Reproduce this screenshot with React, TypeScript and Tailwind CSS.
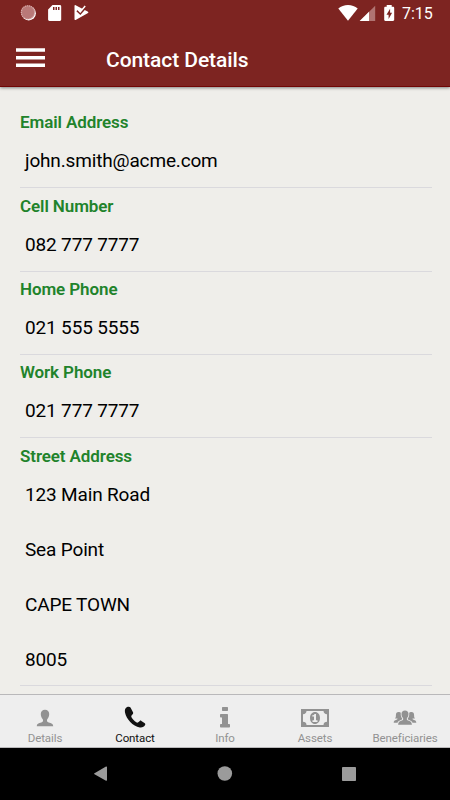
import type { ReactNode } from "react";

const fields = [
  { label: "Email Address", lines: ["john.smith@acme.com"] },
  { label: "Cell Number", lines: ["082 777 7777"] },
  { label: "Home Phone", lines: ["021 555 5555"] },
  { label: "Work Phone", lines: ["021 777 7777"] },
  {
    label: "Street Address",
    lines: ["123 Main Road", "Sea Point", "CAPE TOWN", "8005"],
  },
];

const tabs: { name: string; icon: ReactNode }[] = [
  {
    name: "Details",
    icon: (
      <path d="M16 4.700c-2.600 0-4.200 1.600-4.200 4.300 0 2.200.8 4.200 2.100 5.400.4 1.500-.1 2.500-1.600 3.100-2.600.9-4.200 1-4.500 3.700h16.400c-.3-2.700-1.900-2.800-4.500-3.700-1.500-.6-2-1.600-1.600-3.100 1.300-1.200 2.100-3.200 2.100-5.400 0-2.700-1.600-4.300-4.200-4.300z" />
    ),
  },
  {
    name: "Contact",
    icon: (
      <path d="M8.100 2C6 3 5.600 5.300 6 7.500c1.300 6.800 7.800 13.600 14.800 14.900 2.300.4 4.400-.7 5.400-2.700.3-.6.100-1.100-.4-1.500l-3.400-2.300c-.6-.4-1.100-.4-1.600 0l-1.500 1.300c-.7.5-1.300.6-2 .1-2-1.300-3.600-3.100-4.800-5.100-.4-.7-.3-1.300.2-1.900l1.200-1.400c.4-.5.4-1 .1-1.600L11.500 2.500C11 1.600 9.400 1.400 8.100 2z" />
    ),
  },
  {
    name: "Info",
    icon: (
      <path d="M13.700 2h4.600c.5 0 .7.2.7.7v2.600c0 .5-.2.700-.7.700h-4.600c-.5 0-.7-.2-.7-.7V2.700c0-.5.2-.7.7-.7zM11.800 9h6.500c.5 0 .7.200.7.700v9.300h1.200c.5 0 .8.200.8.700v2c0 .5-.3.700-.8.700h-8.400c-.5 0-.8-.2-.8-.7v-2c0-.5.3-.7.8-.7h1.200v-6.500h-1.200c-.5 0-.8-.2-.8-.7V9.700c0-.5.300-.7.800-.7z" />
    ),
  },
  {
    name: "Assets",
    icon: (
      <>
        <path
          fillRule="evenodd"
          d="M2 4h28v18H2zM7.500 6C7.500 8 6 9.200 4 9.200v7.600c2 0 3.500 1.200 3.500 3.200h17c0-2 1.500-3.200 3.500-3.200V9.200c-2 0-3.500-1.200-3.500-3.200z"
        />
        <path
          fillRule="evenodd"
          d="M16 7c-2.900 0-5 2.500-5 6s2.100 6 5 6 5-2.500 5-6-2.100-6-5-6zm-.5 2H17v6.300h1.500V17h-5v-1.700H15v-3.800h-1.700v-1.200c1.200 0 2-.4 2.200-1.300z"
        />
      </>
    ),
  },
  {
    name: "Beneficiaries",
    icon: (
      <>
        <path d="M16 5.500c-2.200 0-3.500 1.300-3.500 3.500 0 1.800.6 3.200 1.600 4.200.4 1.400-.2 2-1.300 2.400-2 .7-3.600 1.400-3.700 4.100h13.800c-.1-2.700-1.700-3.400-3.700-4.100-1.100-.4-1.700-1-1.300-2.400 1-1 1.600-2.400 1.600-4.200 0-2.200-1.300-3.500-3.500-3.500z" />
        <path d="M9.500 7c1.200 0 1.900.3 2.300.8-.3 2.400.2 4.500 1.500 6-.2.800-1 1.100-2 1.500-1.400.5-2.300 1.100-2.800 2.500H4.700c0-2.100 1-2.500 2.400-2.900 1.200-.4 1.700-.6 1.300-1.400H6c.8-.9.900-2 .9-3.300C6.900 8 7.800 7 9.500 7zM22.500 7c-1.200 0-1.900.3-2.300.8.300 2.400-.2 4.500-1.500 6 .2.800 1 1.100 2 1.500 1.400.5 2.300 1.100 2.800 2.500h3.800c0-2.100-1-2.500-2.400-2.900-1.200-.4-1.700-.6-1.300-1.400H26c-.8-.9-.9-2-.9-3.300C25.100 8 24.200 7 22.500 7z" />
      </>
    ),
  },
];

function StatusBar() {
  return (
    <div className="flex h-[27px] items-start justify-between text-white">
      <svg className="h-[27px] w-[100px]" viewBox="0 0 100 27">
        <circle cx="28.700" cy="13.200" r="7.200" fill="#fff" />
        <circle cx="27.800" cy="12.300" r="7" fill="#b97978" />
        <circle
          cx="28"
          cy="12.400"
          r="6.600"
          fill="none"
          stroke="#d5aaa8"
          strokeWidth="1.200"
          strokeDasharray="1 1"
        />
        <path
          fill="#fff"
          fillRule="evenodd"
          d="M52.500 5h7.300c.8 0 1.400.6 1.400 1.400v13.200c0 .8-.6 1.400-1.400 1.400H49.500c-.8 0-1.400-.6-1.400-1.400V9.400zM53 7v3h1.500V7zm2.500 0v3H57V7zM58 7v3h1.500V7z"
        />
        <path
          fill="#fff"
          d="M75.600 5.200l12 6.400c1.100.6 1.100 1.100 0 1.700l-12 6.700c-.7.300-1.100 0-1.100-.7V6c0-.7.4-1.100 1.100-.8z"
        />
        <path
          fill="none"
          stroke="#7d2421"
          strokeWidth="1.800"
          d="M77 10.600l3.300 3.200 6.300-7.200"
        />
        <path
          fill="none"
          stroke="#fff"
          strokeWidth="1.500"
          d="M77.700 9.300l2.500 2.600 5-5.800"
        />
      </svg>
      <div className="flex">
        <svg className="h-[27px] w-[64px]" viewBox="336 0 64 27">
          <path
            fill="#fff"
            d="M348 20.800l-9.700-12.200C341 6.200 344.300 5 348 5s7 1.200 9.700 3.600z"
          />
          <path fill="#b07472" d="M375.200 5.700v15.200h-15.500z" />
          <path fill="#fff" d="M369 11.800v9.100h-9.300z" />
          <path
            fill="#fff"
            fillRule="evenodd"
            d="M386.700 5h5v1.700h1.300c.7 0 1.200.5 1.200 1.200v11.900c0 .7-.5 1.200-1.200 1.200h-7.600c-.7 0-1.200-.5-1.200-1.200V7.900c0-.7.5-1.200 1.200-1.200h1.300zm3.400 3.700l-3.600 6h2.100v4.200l3.500-6.100h-2z"
          />
        </svg>
        <span className="w-[50px] pl-[2px] pt-[2px] text-[16px] leading-6">
          7:15
        </span>
      </div>
    </div>
  );
}

function Header() {
  return (
    <header className="relative h-[87px] border-b border-[#700605] bg-[#7d2421] text-white shadow-[0_1px_3px_rgba(0,0,0,0.45)]">
      <StatusBar />
      <div className="flex h-[59px] items-center pl-4">
        <svg
          className="mt-[2px] h-[20px] w-[29px]"
          viewBox="0 0 29 20"
          fill="currentColor"
        >
          <path d="M0 .2h29v3.600H0zM0 8h29v3.500H0zM0 15.600h29v3.500H0z" />
        </svg>
        <h1 className="ml-[61px] mt-[6px] text-[21px] font-medium leading-7 tracking-[-0.070px]">
          Contact Details
        </h1>
      </div>
    </header>
  );
}

export default function App() {
  return (
    <div className="flex h-[800px] w-[450px] flex-col overflow-hidden bg-[#efeeea] font-['Roboto',sans-serif]">
      <Header />
      <main className="flex-1 overflow-hidden pl-5 pr-[18px] pt-[17.800px]">
        {fields.map((field) => (
          <section key={field.label} className="border-b border-[#dad9dd]">
            <h2 className="h-[27.500px] pt-[5.500px] text-[17px] font-semibold leading-6 tracking-[-0.100px] text-[#21832b]">
              {field.label}
            </h2>
            {field.lines.map((line) => (
              <p
                key={line}
                className="h-[54.900px] pl-[5px] text-[19px] leading-[58px] tracking-[-0.160px] text-black"
              >
                {line}
              </p>
            ))}
          </section>
        ))}
      </main>
      <nav className="grid h-[54px] grid-cols-5 border-y border-[#b9b8ba] bg-[#eeeeee]">
        {tabs.map((tab) => (
          <div
            key={tab.name}
            className={
              tab.name === "Contact"
                ? "flex flex-col items-center pt-[10px] text-[#111111]"
                : "flex flex-col items-center pt-[10px] text-[#929292]"
            }
          >
            <svg className="h-6 w-8" viewBox="0 0 32 24" fill="currentColor">
              {tab.icon}
            </svg>
            <span className="mt-px text-[11.500px] leading-4 tracking-[-0.100px]">
              {tab.name}
            </span>
          </div>
        ))}
      </nav>
      <div className="h-[52px] bg-black">
        <svg className="h-[52px] w-[450px]" viewBox="0 748 450 52" fill="#9b9b9b">
          <path d="M106 766.500c.6-.3 1 0 1 .6v13c0 .6-.4.900-1 .6l-11.500-6.400c-.6-.3-.6-.8 0-1.100z" />
          <circle cx="224.800" cy="773.500" r="7.300" />
          <rect x="342" y="767" width="14" height="14" rx="0.800" />
        </svg>
      </div>
    </div>
  );
}
